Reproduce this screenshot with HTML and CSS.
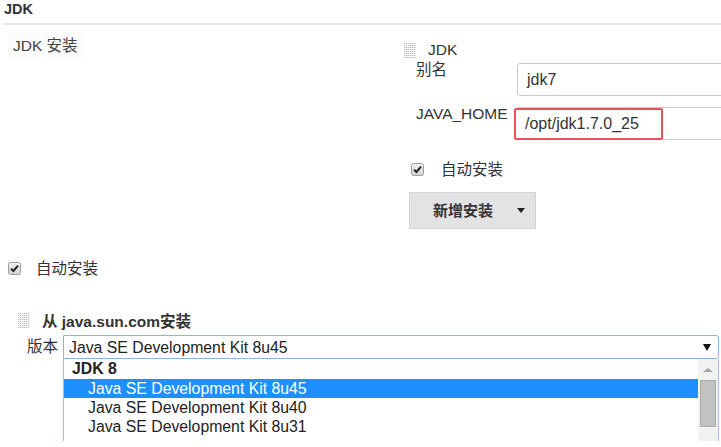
FILE: index.html
```html
<!DOCTYPE html>
<html>
<head>
<meta charset="utf-8">
<link rel="stylesheet" href="styles.css">
</head>
<body>
<div class="page">
  <div class="title">JDK</div>
  <div class="section">
    <div class="left"><span class="sec-label">JDK 安装</span></div>
    <div class="right">
      <div class="ihead"><span class="grip"></span><span>JDK</span></div>
      <div class="fields">
        <div class="flabel l1">别名</div>
        <div class="input i1">jdk7</div>
        <div class="flabel l2">JAVA_HOME</div>
        <div class="input i2">/opt/jdk1.7.0_25<span class="mark"></span></div>
      </div>
      <div class="check c1">
        <svg class="cb" width="13" height="13" viewBox="0 0 13 13"><defs><linearGradient id="g1" x1="0" y1="0" x2="0" y2="1"><stop offset="0" stop-color="#f2f2f2"/><stop offset="1" stop-color="#d4d4d4"/></linearGradient></defs><rect x="0.5" y="0.5" width="12" height="12" rx="2" fill="url(#g1)" stroke="#9c9c9c"/><path d="M3 6.6 L5.4 9 L10 3.6" fill="none" stroke="#222" stroke-width="2"/></svg>
        <span>自动安装</span>
      </div>
      <div class="btn"><span>新增安装</span><span class="caret"></span></div>
    </div>
  </div>
  <div class="check c2">
    <svg class="cb" width="13" height="13" viewBox="0 0 13 13"><defs><linearGradient id="g2" x1="0" y1="0" x2="0" y2="1"><stop offset="0" stop-color="#f2f2f2"/><stop offset="1" stop-color="#d4d4d4"/></linearGradient></defs><rect x="0.5" y="0.5" width="12" height="12" rx="2" fill="url(#g2)" stroke="#9c9c9c"/><path d="M3 6.6 L5.4 9 L10 3.6" fill="none" stroke="#222" stroke-width="2"/></svg>
    <span>自动安装</span>
  </div>
  <div class="installer">
    <div class="ihead ih2"><span class="grip"></span><b>从 java.sun.com安装</b></div>
    <div class="ver-row">
      <span class="ver-label">版本</span>
      <div class="combo">
        <div class="select"><span>Java SE Development Kit 8u45</span><span class="arrow"></span></div>
        <div class="list">
          <div class="items">
            <div class="group">JDK 8</div>
            <div class="opt sel">Java SE Development Kit 8u45</div>
            <div class="opt">Java SE Development Kit 8u40</div>
            <div class="opt">Java SE Development Kit 8u31</div>
          </div>
          <div class="scroll"><span class="up"></span><span class="thumb"></span></div>
        </div>
      </div>
    </div>
  </div>
</div>
</body>
</html>
```
FILE: styles.css
```css
html, body {
  margin: 0;
  padding: 0;
  background: #fff;
  overflow: hidden;
}
.page {
  width: 721px;
  height: 447px;
  overflow: hidden;
  font-family: "Liberation Sans", Arial, "Noto Sans CJK SC", sans-serif;
  font-size: 15.5px;
  line-height: 19px;
  color: #333;
}
.title {
  margin-left: 3px;
  padding-left: 1px;
  height: 23px;
  font-size: 14.5px;
  font-weight: bold;
  color: #333;
  border-bottom: 2px solid #e6e6e6;
}
.section {
  display: flex;
}
.left {
  flex: none;
  width: 404px;
  padding-top: 8px;
}
.sec-label {
  display: inline-block;
  margin-left: 8px;
  padding: 3px 6px 3px 5px;
  background: #fbfbfb;
  color: #444;
}
.right {
  flex: none;
  width: 330px;
  padding-top: 15px;
}
.ihead {
  display: flex;
  align-items: flex-start;
  gap: 12px;
}
.grip {
  flex: none;
  width: 12px;
  height: 15px;
  margin-top: 3px;
  background:
    repeating-linear-gradient(0deg, transparent 0 1px, #fff 1px 2px),
    repeating-linear-gradient(90deg, #b9b9b9 0 1px, #e9e9e9 1px 2px);
}
.fields {
  display: grid;
  grid-template-columns: 99px 215px;
  row-gap: 11px;
  margin-left: 12px;
}
.flabel {
  color: #333;
  white-space: nowrap;
}
.l1 {
  margin-top: 1px;
}
.l2 {
  margin-top: -3px;
}
.input {
  box-sizing: border-box;
  height: 33px;
  border: 1px solid #cacaca;
  border-radius: 3px;
  padding: 0 9px;
  line-height: 31px;
  font-size: 16px;
  color: #333;
  background: #fff;
}
.i1 {
  margin-top: 4px;
  margin-left: 2px;
}
.i2 {
  position: relative;
}
.mark {
  position: absolute;
  left: -2px;
  top: 0;
  width: 149px;
  height: 32px;
  box-sizing: border-box;
  border: 2px solid #e8505a;
  border-radius: 2px;
}
.check {
  display: flex;
  align-items: center;
  color: #333;
}
.cb {
  display: block;
  flex: none;
}
.c1 {
  margin-left: 7px;
  margin-top: 20px;
  gap: 17px;
}
.c2 {
  margin-left: 8px;
  margin-top: 30px;
  gap: 15px;
}
.btn {
  display: flex;
  align-items: center;
  box-sizing: border-box;
  width: 127px;
  height: 37px;
  margin-left: 5px;
  margin-top: 13px;
  padding-left: 23px;
  background: #e3e3e3;
  border: 1px solid #d4d4d4;
  color: #333;
  font-weight: bold;
  font-size: 15px;
}
.caret {
  margin-left: auto;
  margin-right: 10px;
  width: 0;
  height: 0;
  border-left: 4px solid transparent;
  border-right: 4px solid transparent;
  border-top: 5px solid #222;
}
.installer {
  margin-top: 34px;
}
.ih2 {
  margin-left: 18px;
}
.ih2 .grip {
  margin-top: 1px;
}
.ih2 b {
  color: #333;
}
.ver-row {
  display: flex;
  margin-top: 4px;
}
.ver-label {
  width: 36px;
  margin-left: 27px;
  padding-top: 2px;
  color: #333;
}
.combo {
  width: 656px;
}
.select {
  display: flex;
  align-items: center;
  box-sizing: border-box;
  height: 24px;
  border: 1px solid #8fb1e4;
  border-radius: 0 3px 3px 0;
  padding-left: 5px;
  font-size: 15.8px;
  color: #222;
  background: #fff;
}
.arrow {
  margin-left: auto;
  margin-right: 7px;
  width: 0;
  height: 0;
  border-left: 4px solid transparent;
  border-right: 4px solid transparent;
  border-top: 7px solid #111;
}
.list {
  display: flex;
  height: 82px;
  border-left: 1px solid #a9bcd9;
  border-right: 1px solid #a9bcd9;
  background: #fff;
}
.items {
  flex: 1;
  font-size: 15.8px;
  color: #222;
}
.group {
  height: 20px;
  line-height: 20px;
  padding-left: 8px;
  font-weight: bold;
}
.opt {
  height: 19px;
  line-height: 19px;
  padding-left: 24px;
}
.sel {
  background: #1e8fff;
  color: #fff;
}
.scroll {
  width: 20px;
  display: flex;
  flex-direction: column;
  align-items: center;
  background: #f2f2f2;
}
.up {
  margin-top: 9px;
  width: 0;
  height: 0;
  border-left: 5px solid transparent;
  border-right: 5px solid transparent;
  border-bottom: 4px solid #a3a3a3;
}
.thumb {
  margin-top: 8px;
  box-sizing: border-box;
  width: 16px;
  height: 47px;
  background: #c2c2c2;
  border: 1px solid #ababab;
}
```
